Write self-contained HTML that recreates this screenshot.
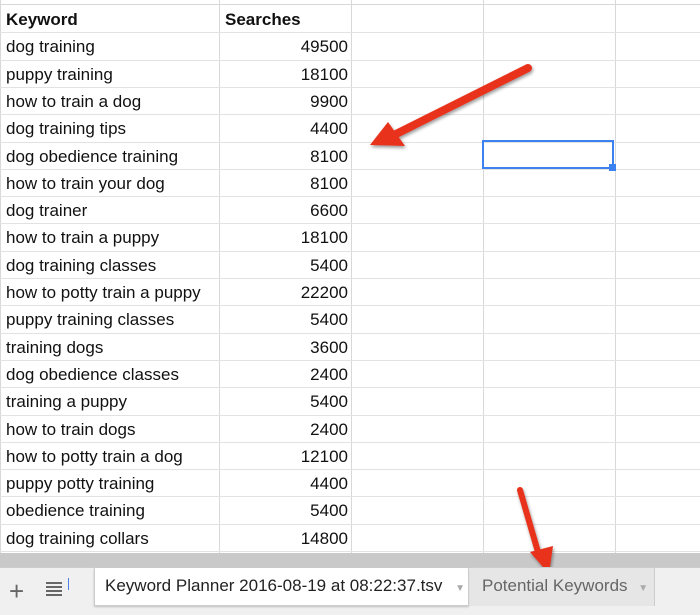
<!DOCTYPE html>
<html><head><style>
body{margin:0;width:700px;height:614px;overflow:hidden;background:#fff;font-family:"Liberation Sans",Arial,sans-serif;position:relative}
.grid{position:absolute;left:0;top:0}
.row{position:absolute;left:0;height:27px;font-size:17px;line-height:30px;color:#111}
.k{position:absolute;left:6px;white-space:nowrap}
.s{position:absolute;right:0;width:90px;text-align:right;white-space:nowrap}
.tabbar{position:absolute;left:0;top:567px;width:700px;height:47px;background:#f0f0f0;border-top:1px solid #ccc}
</style></head><body>
<svg class="grid" width="700" height="567" style="position:absolute;left:0;top:0">
<rect x="0" y="0" width="700" height="567" fill="#fff"/>
<g stroke="#d8d8d8" stroke-width="1">
<line x1="0" y1="4.5" x2="700" y2="4.5"/>
<line x1="0.5" y1="0" x2="0.5" y2="553"/>
<line x1="219.5" y1="0" x2="219.5" y2="553"/>
<line x1="351.5" y1="0" x2="351.5" y2="553"/>
<line x1="483.5" y1="0" x2="483.5" y2="553"/>
<line x1="615.5" y1="0" x2="615.5" y2="553"/>
</g>
<g stroke="#e2e2e2" id="hl"></g>
<rect x="0" y="553" width="700" height="14" fill="#c9c9c9"/>
<rect x="483" y="141" width="130" height="27" fill="none" stroke="#3b82f0" stroke-width="2"/>
<rect x="609" y="164" width="7" height="7" fill="#3b82f0"/>
</svg>
<div id="rows"></div>
<svg width="700" height="614" style="position:absolute;left:0;top:0">
<defs><filter id="sh"><feDropShadow dx="1" dy="2" stdDeviation="1.5" flood-color="#000" flood-opacity="0.4"/></filter></defs>
<g filter="url(#sh)" fill="#e8321c">
<line x1="528" y1="68" x2="392" y2="136" stroke="#e8321c" stroke-width="8" stroke-linecap="round"/>
<polygon points="370,145 388,122 405,146"/>
<line x1="520" y1="490" x2="538" y2="552" stroke="#e8321c" stroke-width="6" stroke-linecap="round"/>
<polygon points="549,574 530,552 553,546"/>
</g>
</svg>
<div class="tabbar">
<div style="position:absolute;left:9px;top:8px;font-size:26px;color:#666">+</div>
<div style="position:absolute;left:46px;top:14px;width:16px">
<div style="height:2px;background:#666;margin-bottom:2px"></div><div style="height:2px;background:#666;margin-bottom:2px"></div><div style="height:2px;background:#666;margin-bottom:2px"></div><div style="height:2px;background:#666"></div></div>
<div style="position:absolute;left:68px;top:10px;width:1px;height:12px;background:#4a80e8"></div>
<div style="position:absolute;left:94px;top:0;width:375px;height:38px;background:#fff;border:1px solid #ccc;border-top:none;box-shadow:0 1px 2px rgba(0,0,0,.2);font-size:17px;color:#222;line-height:36px;padding-left:10px;box-sizing:border-box">Keyword Planner 2016-08-19 at 08:22:37.tsv <span style="color:#aaa;font-size:10px;margin-left:8px">▼</span></div>
<div style="position:absolute;left:470px;top:0;width:185px;height:38px;background:#e6e6e6;border-right:1px solid #ccc;font-size:17px;color:#666;line-height:36px;padding-left:12px;box-sizing:border-box">Potential Keywords <span style="color:#aaa;font-size:10px;margin-left:6px">▼</span></div>
</div>
<script>
var d=[["Keyword","Searches"],["dog training",49500],["puppy training",18100],["how to train a dog",9900],["dog training tips",4400],["dog obedience training",8100],["how to train your dog",8100],["dog trainer",6600],["how to train a puppy",18100],["dog training classes",5400],["how to potty train a puppy",22200],["puppy training classes",5400],["training dogs",3600],["dog obedience classes",2400],["training a puppy",5400],["how to train dogs",2400],["how to potty train a dog",12100],["puppy potty training",4400],["obedience training",5400],["dog training collars",14800]];
var h="",hl="";
for(var i=0;i<d.length;i++){var y=5+i*27.3;
if(i==0)h+='<div class="row" style="top:'+y+'px;font-weight:bold"><span class="k">Keyword</span><span class="k" style="left:225px">Searches</span></div>';
else h+='<div class="row" style="top:'+y+'px;width:348px"><span class="k">'+d[i][0]+'</span><span class="s">'+d[i][1]+'</span></div>';
hl+='<line x1="0" y1="'+(Math.round(y+27.3)+.5)+'" x2="700" y2="'+(Math.round(y+27.3)+.5)+'"/>';}
document.getElementById("rows").innerHTML=h;
document.getElementById("hl").innerHTML=hl;
</script>
</body></html>
